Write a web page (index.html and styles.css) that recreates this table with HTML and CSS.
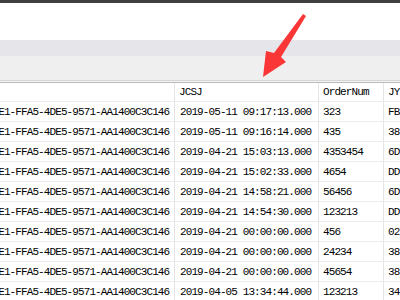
FILE: index.html
```html
<!DOCTYPE html>
<html>
<head>
<meta charset="utf-8">
<link rel="stylesheet" href="styles.css">
</head>
<body>
<div class="topbar"></div>
<div class="blank"></div>
<div class="band1"></div>
<div class="band2"></div>
<div class="sep"></div>
<div class="grid">
  <div class="row head"><div class="c c1"></div><div class="c c2 h">JCSJ</div><div class="c c3 h">OrderNum</div><div class="c c4 h">JYID</div></div>
  <div class="row"><div class="c c1">3F5A2BE1-FFA5-4DE5-9571-AA1400C3C146</div><div class="c c2">2019-05-11 09:17:13.000</div><div class="c c3">323</div><div class="c c4">FB</div></div>
  <div class="row"><div class="c c1">3F5A2BE1-FFA5-4DE5-9571-AA1400C3C146</div><div class="c c2">2019-05-11 09:16:14.000</div><div class="c c3">435</div><div class="c c4">38</div></div>
  <div class="row"><div class="c c1">3F5A2BE1-FFA5-4DE5-9571-AA1400C3C146</div><div class="c c2">2019-04-21 15:03:13.000</div><div class="c c3">4353454</div><div class="c c4">6D</div></div>
  <div class="row"><div class="c c1">3F5A2BE1-FFA5-4DE5-9571-AA1400C3C146</div><div class="c c2">2019-04-21 15:02:33.000</div><div class="c c3">4654</div><div class="c c4">DD</div></div>
  <div class="row"><div class="c c1">3F5A2BE1-FFA5-4DE5-9571-AA1400C3C146</div><div class="c c2">2019-04-21 14:58:21.000</div><div class="c c3">56456</div><div class="c c4">6D</div></div>
  <div class="row"><div class="c c1">3F5A2BE1-FFA5-4DE5-9571-AA1400C3C146</div><div class="c c2">2019-04-21 14:54:30.000</div><div class="c c3">123213</div><div class="c c4">DD</div></div>
  <div class="row"><div class="c c1">3F5A2BE1-FFA5-4DE5-9571-AA1400C3C146</div><div class="c c2">2019-04-21 00:00:00.000</div><div class="c c3">456</div><div class="c c4">02</div></div>
  <div class="row"><div class="c c1">3F5A2BE1-FFA5-4DE5-9571-AA1400C3C146</div><div class="c c2">2019-04-21 00:00:00.000</div><div class="c c3">24234</div><div class="c c4">38</div></div>
  <div class="row"><div class="c c1">3F5A2BE1-FFA5-4DE5-9571-AA1400C3C146</div><div class="c c2">2019-04-21 00:00:00.000</div><div class="c c3">45654</div><div class="c c4">38</div></div>
  <div class="row"><div class="c c1">3F5A2BE1-FFA5-4DE5-9571-AA1400C3C146</div><div class="c c2">2019-04-05 13:34:44.000</div><div class="c c3">123213</div><div class="c c4">34</div></div>
</div>
<svg class="arrow" width="400" height="100" viewBox="0 0 400 100">
  <polygon points="303,14 306,16 281,57 286,62 263,77 266,51 274,53" fill="#fb3636"/>
</svg>
</body>
</html>
```
FILE: styles.css
```css
html, body {
  margin: 0;
  padding: 0;
  width: 400px;
  height: 300px;
  overflow: hidden;
  background: #ffffff;
  position: relative;
}
.topbar { height: 3px; background: #404040; }
.blank { height: 37px; background: #ffffff; }
.band1 { height: 16px; background: #e6e5ea; }
.band2 { height: 24px; background: #efefef; }
.sep {
  height: 1px;
  background: #f2f2f2;
  border-top: 1px solid #d6d6d6;
  border-bottom: 1px solid #bbbbbb;
}
.grid {
  margin-left: -41px;
  font-family: "Liberation Mono", "DejaVu Sans Mono", monospace;
  font-size: 11px;
  letter-spacing: -0.9px;
  color: #000000;
}
.row {
  display: grid;
  grid-template-columns: 216px 144px 65px 60px;
  height: 20px;
  box-sizing: border-box;
  border-bottom: 1px solid #ececec;
}
.row.head { height: 19px; }
.c {
  box-sizing: border-box;
  border-right: 1px solid #e4e4e4;
  white-space: nowrap;
  overflow: hidden;
  display: flex;
  align-items: center;
}
.c1 { padding-left: 5px; }
.c2 { padding-left: 5px; }
.c3 { padding-left: 4px; }
.c4 { padding-left: 4px; border-right: none; }
.c2.h { padding-left: 4px; }
.arrow {
  position: absolute;
  left: 0;
  top: 0;
}
```
